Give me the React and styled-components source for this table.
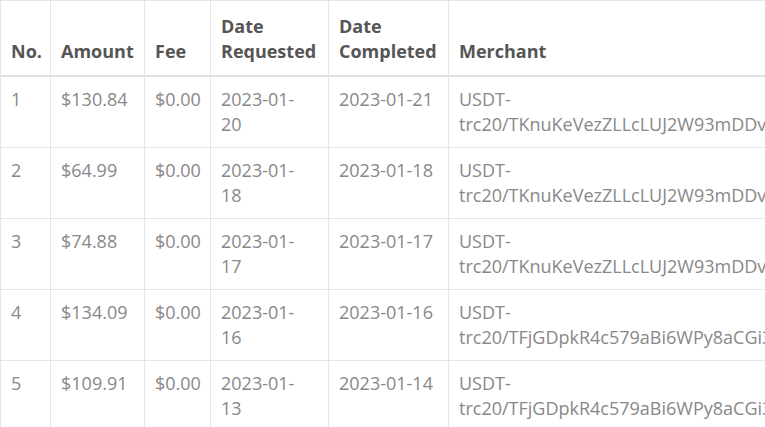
import React from 'react';
import styled, {createGlobalStyle} from 'styled-components';

const GlobalStyle = createGlobalStyle`
    html, body {
        margin: 0;
        padding: 0;
        background: #fff;
        overflow: hidden;
    }
    body {
        font-family: "Open Sans", "Noto Sans", sans-serif;
    }
`;

const Wrapper = styled.div`
    width: 765px;
    overflow: hidden;
`;

const Table = styled.table`
    border-collapse: collapse;
    table-layout: fixed;
    width: 900px;
    font-size: 18px;
    line-height: 25px;
    color: #888;
`;

const HeadCell = styled.th`
    text-align: left;
    vertical-align: bottom;
    font-weight: 700;
    color: #555;
    padding: 13px 10px 11px;
    border: 1px solid #e6e6e6;
    border-bottom: 2px solid #e2e2e2;
`;

const Cell = styled.td`
    vertical-align: top;
    padding: 10px ${p => (p.$narrow ? '18px' : '10px')} 10px 10px;
    border: 1px solid #e6e6e6;
`;

const columns = [
    {label: 'No.', width: 50},
    {label: 'Amount', width: 94},
    {label: 'Fee', width: 66},
    {label: 'Date Requested', width: 118},
    {label: 'Date Completed', width: 120},
    {label: 'Merchant', width: 452},
];

const rows = [
    {amount: '$130.84', fee: '$0.00', requested: '2023-01-20', completed: '2023-01-21', merchant: 'USDT-trc20/TKnuKeVezZLLcLUJ2W93mDDvXq8RpZ5aLh'},
    {amount: '$64.99', fee: '$0.00', requested: '2023-01-18', completed: '2023-01-18', merchant: 'USDT-trc20/TKnuKeVezZLLcLUJ2W93mDDvXq8RpZ5aLh'},
    {amount: '$74.88', fee: '$0.00', requested: '2023-01-17', completed: '2023-01-17', merchant: 'USDT-trc20/TKnuKeVezZLLcLUJ2W93mDDvXq8RpZ5aLh'},
    {amount: '$134.09', fee: '$0.00', requested: '2023-01-16', completed: '2023-01-16', merchant: 'USDT-trc20/TFjGDpkR4c579aBi6WPy8aCGi3NwKe7Tq'},
    {amount: '$109.91', fee: '$0.00', requested: '2023-01-13', completed: '2023-01-14', merchant: 'USDT-trc20/TFjGDpkR4c579aBi6WPy8aCGi3NwKe7Tq'},
];

const App = () => (
    <Wrapper>
        <GlobalStyle/>
        <Table>
            <colgroup>
                {columns.map(c => <col key={c.label} style={{width: c.width}}/>)}
            </colgroup>
            <thead>
                <tr>
                    {columns.map(c => <HeadCell key={c.label}>{c.label}</HeadCell>)}
                </tr>
            </thead>
            <tbody>
                {rows.map((r, i) => (
                    <tr key={i}>
                        <Cell>{i + 1}</Cell>
                        <Cell>{r.amount}</Cell>
                        <Cell>{r.fee}</Cell>
                        <Cell $narrow>{r.requested}</Cell>
                        <Cell>{r.completed}</Cell>
                        <Cell>{r.merchant}</Cell>
                    </tr>
                ))}
            </tbody>
        </Table>
    </Wrapper>
);

export default App;
